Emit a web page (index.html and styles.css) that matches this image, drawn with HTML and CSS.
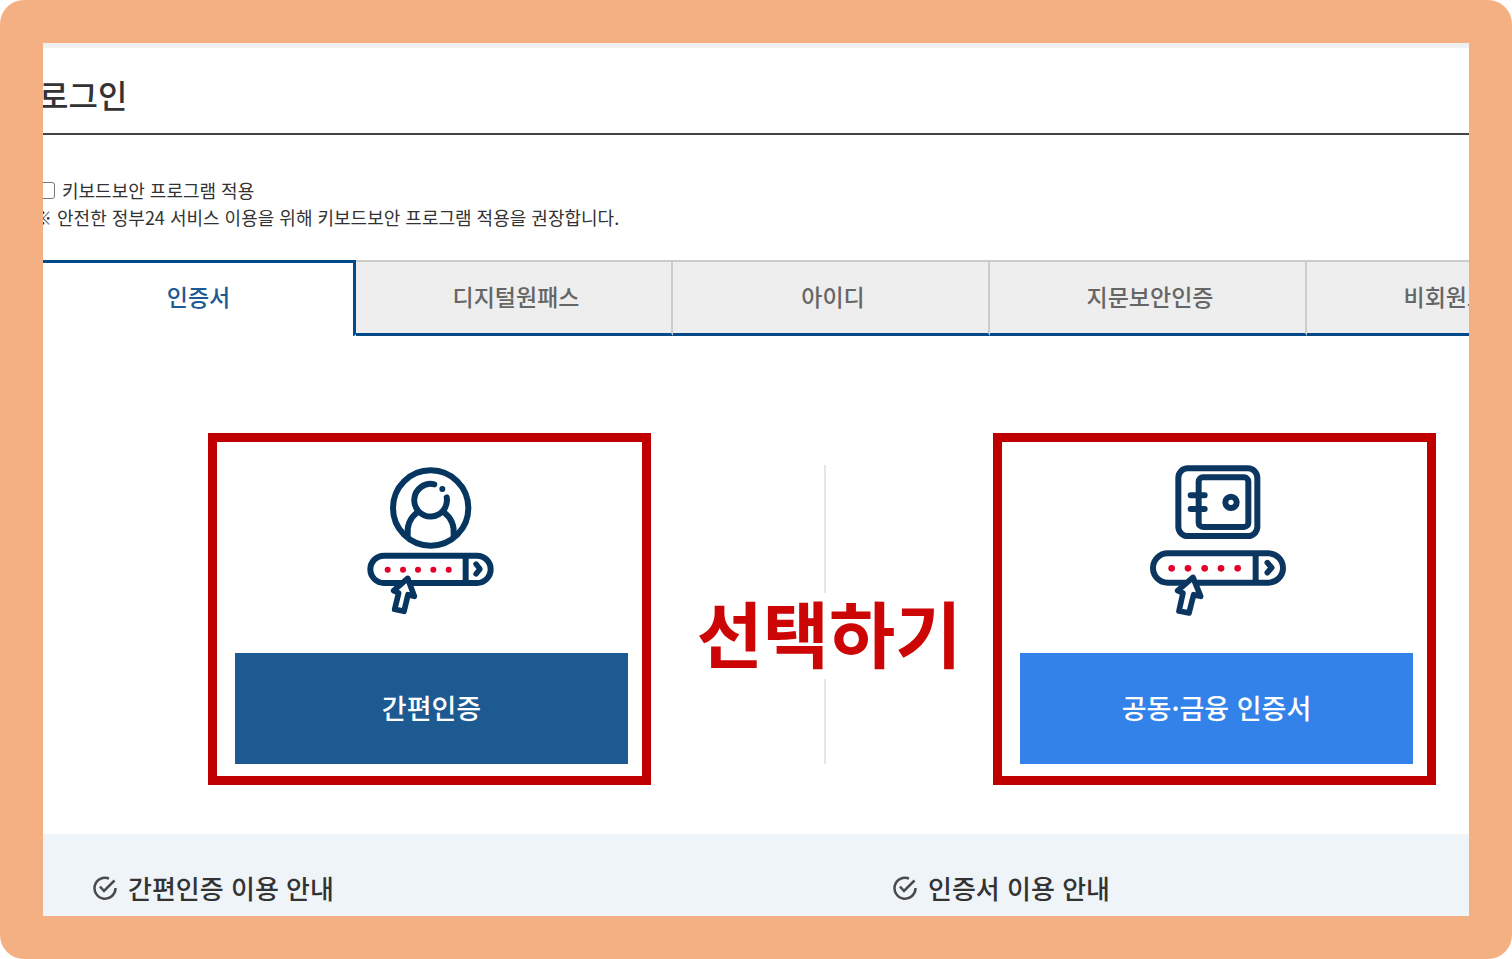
FILE: index.html
```html
<!DOCTYPE html>
<html lang="ko">
<head>
    <meta charset="UTF-8">
    <meta name="viewport" content="width=device-width, initial-scale=1.0">
    <title>로그인</title>
    <link rel="stylesheet" href="styles.css">
</head>
<body>
    <div class="frame">
        <main class="screen">
            <header class="page-header">
                <h1>로그인</h1>
            </header>

            <!-- 키보드보안 -->
            <div class="security">
                <div class="security-check">
                    <input type="checkbox" id="keyboardSecurity">
                    <label for="keyboardSecurity">키보드보안 프로그램 적용</label>
                </div>
                <p>※ 안전한 정부24 서비스 이용을 위해 키보드보안 프로그램 적용을 권장합니다.</p>
            </div>

            <!-- 로그인 방법 탭 -->
            <nav class="tabs">
                <a href="#cert" class="tab active">인증서</a>
                <a href="#onepass" class="tab">디지털원패스</a>
                <a href="#userid" class="tab">아이디</a>
                <a href="#finger" class="tab">지문보안인증</a>
                <a href="#guest" class="tab">비회원로그인</a>
            </nav>

            <!-- 인증 선택 -->
            <section class="choices" id="cert">
                <div class="choice">
                    <svg class="choice-icon" viewBox="3 0 480 510" fill="none" stroke="#06365f" stroke-width="18" stroke-linecap="round" stroke-linejoin="round" aria-hidden="true">
                        <circle cx="239" cy="159" r="113"/>
                        <path d="M250 88A49 49 0 1 0 287 127"/>
                        <path d="M199 172C177 188 167 212 170 244M279 172C301 188 311 212 308 244"/>
                        <circle cx="274" cy="102" r="9" fill="#06365f" stroke="none"/>
                        <rect x="58" y="302" width="361" height="82" rx="41"/>
                        <path d="M344 302V384" stroke-linecap="butt"/>
                        <path d="M375 327L387 342L375 357" stroke-width="16"/>
                        <g fill="#e4002b" stroke="none">
                            <circle cx="110" cy="344" r="9"/>
                            <circle cx="156" cy="344" r="9"/>
                            <circle cx="201" cy="344" r="9"/>
                            <circle cx="247" cy="344" r="9"/>
                            <circle cx="293" cy="344" r="9"/>
                        </g>
                        <path d="M170 370L128 407L143 414L131 463L159 469L171 419L190 424Z" fill="#fff" stroke-width="17"/>
                    </svg>
                    <button type="button" class="btn btn-simple">간편인증</button>
                </div>

                <div class="middle">
                    <span class="line"></span>
                    <strong>선택하기</strong>
                    <span class="line"></span>
                </div>

                <div class="choice">
                    <svg class="choice-icon" viewBox="3 0 480 510" fill="none" stroke="#0b3660" stroke-width="18" stroke-linecap="round" stroke-linejoin="round" aria-hidden="true">
                        <rect x="127" y="40" width="237" height="203" rx="28"/>
                        <rect x="188" y="67" width="149" height="149" rx="13"/>
                        <path d="M164 121H206M164 162H206"/>
                        <circle cx="285" cy="142" r="17"/>
                        <rect x="51" y="295" width="390" height="88" rx="44"/>
                        <path d="M359 295V383" stroke-linecap="butt"/>
                        <path d="M394 323L407 338L394 353" stroke-width="17"/>
                        <g fill="#e4002b" stroke="none">
                            <circle cx="107" cy="340" r="10"/>
                            <circle cx="156" cy="340" r="10"/>
                            <circle cx="206" cy="340" r="10"/>
                            <circle cx="255" cy="340" r="10"/>
                            <circle cx="305" cy="340" r="10"/>
                        </g>
                        <path d="M171 367L125 407L141 414L129 468L159 474L173 419L194 424Z" fill="#fff" stroke-width="17"/>
                    </svg>
                    <button type="button" class="btn btn-joint">공동·금융 인증서</button>
                </div>
            </section>

            <!-- 이용 안내 -->
            <section class="guide">
                <h2>
                    <svg class="check-icon" viewBox="0 0 48 48" fill="none" stroke="#4a4a4a" stroke-width="5" aria-hidden="true">
                        <path d="M32 5A21 21 0 1 0 45 24"/>
                        <path d="M14 21L22 30L43 9"/>
                    </svg>
                    간편인증 이용 안내
                </h2>
                <h2>
                    <svg class="check-icon" viewBox="0 0 48 48" fill="none" stroke="#4a4a4a" stroke-width="5" aria-hidden="true">
                        <path d="M32 5A21 21 0 1 0 45 24"/>
                        <path d="M14 21L22 30L43 9"/>
                    </svg>
                    인증서 이용 안내
                </h2>
            </section>
        </main>
    </div>
</body>
</html>
```

FILE: styles.css
```css
* {
    box-sizing: border-box;
}

body {
    margin: 0;
    background-color: #ffffff;
    color: #333333;
    font-family: "Noto Sans CJK KR", sans-serif;
}

h1, h2, p {
    margin: 0;
    font-weight: 500;
}

.frame {
    display: flex;
    min-height: 100vh;
    padding: 43px;
    background-color: #f4b083;
    border-radius: 24px;
}

.screen {
    display: flex;
    flex-direction: column;
    width: 100%;
    overflow: hidden;
    background-color: #ffffff;
    border-top: 5px solid #f0f0f0;
}

.page-header {
    margin-left: -4px;
    padding: 22px 0 15px;
    border-bottom: 2px solid #444444;
}

h1 {
    font-size: 32px;
    line-height: 48px;
}

/* 키보드보안 */
.security {
    margin-left: -5px;
    padding: 42px 0 29px;
    font-size: 18px;
    line-height: 27px;
    white-space: nowrap;
}

.security p {
    margin-left: -4px;
    font-weight: 400;
}

.security-check {
    display: flex;
    align-items: center;
    gap: 7px;
}

.security-check input {
    appearance: none;
    width: 17px;
    height: 17px;
    margin: 0;
    background-color: #ffffff;
    border: 1px solid #767676;
    border-radius: 3px;
}

/* 탭 */
.tabs {
    display: flex;
    margin-left: -4px;
}

.tab {
    flex: 0 0 317px;
    height: 76px;
    padding-left: 5px;
    border-top: 2px solid #cccccc;
    border-right: 2px solid #cccccc;
    border-bottom: 3px solid #044a8b;
    background-color: #eeeeee;
    color: #666666;
    font-size: 23px;
    font-weight: 500;
    line-height: 69px;
    text-align: center;
    text-decoration: none;
}

.tab.active {
    border-top: 3px solid #044a8b;
    border-right: 3px solid #044a8b;
    border-bottom: none;
    border-bottom-right-radius: 3px;
    background-color: #ffffff;
    color: #1c5a94;
    line-height: 67px;
}

/* 인증 선택 */
.choices {
    display: flex;
    padding: 97px 33px 49px 165px;
}

.choice {
    flex: 0 0 443px;
    padding: 13px 14px 12px 18px;
    border: 9px solid #c00000;
}

.choice-icon {
    display: block;
    width: 160px;
    height: 170px;
    margin: 0 auto 28px;
}

.btn {
    display: block;
    width: 100%;
    height: 111px;
    padding: 0 0 2px;
    border: none;
    color: #ffffff;
    font-family: inherit;
    font-size: 27px;
    font-weight: 500;
    cursor: pointer;
}

.btn-simple {
    background-color: #1d5a92;
}

.btn-joint {
    background-color: #3282ea;
}

.middle {
    display: flex;
    flex: 1;
    flex-direction: column;
    align-items: center;
    padding: 32px 0 21px 6px;
}

.middle strong {
    padding: 0 0 10px 8px;
    color: #cc0505;
    font-size: 72px;
    font-weight: 700;
    line-height: 76px;
    white-space: nowrap;
}

.line {
    width: 2px;
    flex: 3 0 0;
    background-color: #e6e6e6;
}

.line:last-child {
    flex-grow: 2;
}

/* 이용 안내 */
.guide {
    display: grid;
    flex: 1;
    grid-template-columns: 800px 1fr;
    padding: 34px 0 7px 50px;
    background-color: #eff4f9;
}

.guide h2 {
    display: flex;
    align-items: center;
    gap: 11px;
    height: 40px;
    font-size: 26px;
    line-height: 40px;
    white-space: nowrap;
}

.check-icon {
    width: 24px;
    height: 24px;
}
```
